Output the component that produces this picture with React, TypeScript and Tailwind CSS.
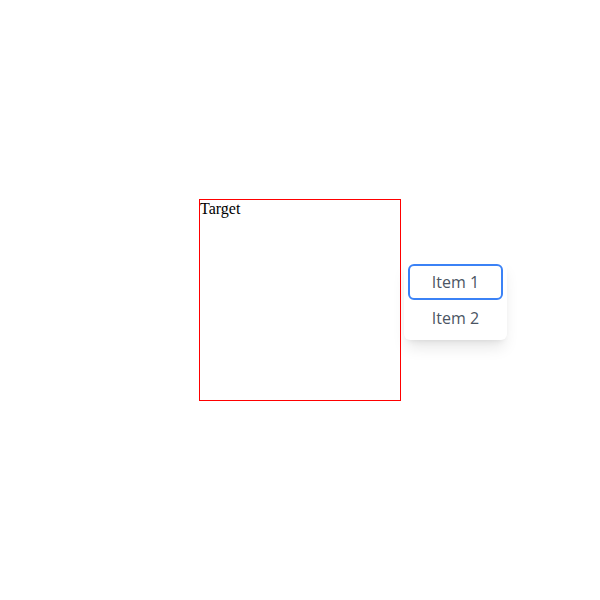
export default function App() {
  return (
    <div className="relative w-[600px] h-[600px] bg-white">
      <div
        className="absolute left-[199px] top-[199px] w-[202px] h-[202px] border border-[#ff0000] text-black text-[16px] leading-[18px]"
        style={{ fontFamily: '"Liberation Serif", serif' }}
      >
        Target
      </div>
      <div
        className="absolute left-[404px] top-[260px] w-[103px] p-1 bg-white rounded-md shadow-lg flex flex-col"
        style={{ fontFamily: '"Open Sans", sans-serif' }}
      >
        <div className="h-9 flex items-center justify-center rounded-md border-2 border-[#3b82f6] text-[16px] text-[#4b5563]">
          Item 1
        </div>
        <div className="h-9 flex items-center justify-center rounded-md text-[16px] text-[#4b5563]">
          Item 2
        </div>
      </div>
    </div>
  );
}
